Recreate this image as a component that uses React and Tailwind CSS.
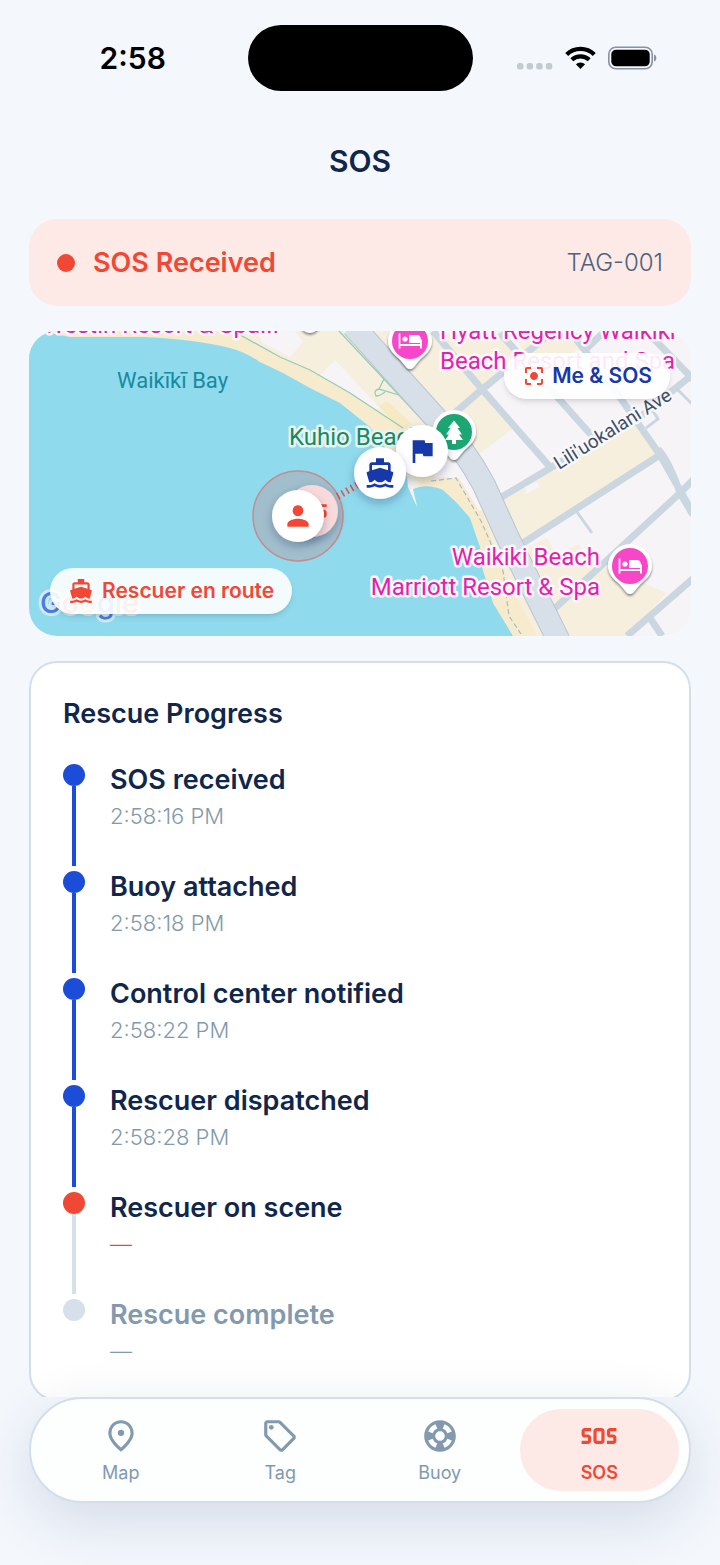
import clsx from "clsx";
import { MdCenterFocusStrong, MdDirectionsBoat, MdFlag, MdOutlineSell, MdPerson, MdSos, MdSupport } from "react-icons/md";

const steps = [
    { title: "SOS received", time: "2:58:16 PM", status: "done" },
    { title: "Buoy attached", time: "2:58:18 PM", status: "done" },
    { title: "Control center notified", time: "2:58:22 PM", status: "done" },
    { title: "Rescuer dispatched", time: "2:58:28 PM", status: "done" },
    { title: "Rescuer on scene", time: "—", status: "active" },
    { title: "Rescue complete", time: "—", status: "pending" },
];

const tabs = [
    { name: "Map", icon: PinIcon },
    { name: "Tag", icon: MdOutlineSell },
    { name: "Buoy", icon: MdSupport },
    { name: "SOS", icon: MdSos, active: true },
];

function PinIcon({ size }) {
    return (
        <svg width={size} height={size} viewBox="0 0 24 24" fill="currentColor" aria-hidden="true">
            <path d="M18 10.2C18 6.57 15.35 4 12 4s-6 2.57-6 6.2c0 2.34 1.95 5.44 6 9.14 4.05-3.7 6-6.8 6-9.14zM12 2c4.2 0 8 3.22 8 8.2 0 3.32-2.67 7.25-8 11.8-5.33-4.55-8-8.48-8-11.8C4 5.22 7.8 2 12 2z" />
            <circle cx="12" cy="10" r="2" />
        </svg>
    );
}

function StatusBar() {
    return (
        <div className="flex items-center pt-[25px] text-black">
            <div className="flex-1 pl-[18px] text-center text-[30px] leading-10 font-semibold">2:58</div>
            <div className="h-[66px] w-[225px] rounded-full bg-black" />
            <div className="flex flex-1 items-center justify-center gap-3 pr-[18px]">
                <svg width="36" height="24" viewBox="0 0 36 24" fill="#c3cad0" aria-hidden="true">
                    <rect x="0" y="17" width="6.5" height="6.5" rx="2.5" />
                    <rect x="9.6" y="17" width="6.5" height="6.5" rx="2.5" />
                    <rect x="19.2" y="17" width="6.5" height="6.5" rx="2.5" />
                    <rect x="28.8" y="17" width="6.5" height="6.5" rx="2.5" />
                </svg>
                <svg width="31" height="24" viewBox="0 0 31 24" fill="none" stroke="#000" aria-hidden="true">
                    <path d="M1.7 8.4a19.8 19.8 0 0 1 27.6 0" strokeWidth="4.2" />
                    <path d="M6.8 13.8a12.6 12.6 0 0 1 17.4 0" strokeWidth="4.2" />
                    <path d="M10.9 18.3a6.8 6.8 0 0 1 9.2 0L15.5 23z" fill="#000" stroke="none" />
                </svg>
                <svg width="49" height="24" viewBox="0 0 49 24" aria-hidden="true">
                    <rect x="0.8" y="1.2" width="43.4" height="21.6" rx="7" fill="none" stroke="#8592a3" strokeWidth="1.6" />
                    <rect x="3.3" y="3.7" width="38.4" height="16.6" rx="4.8" />
                    <path d="M46 8.5c3.2 1 3.2 6 0 7z" fill="#8592a3" />
                </svg>
            </div>
        </div>
    );
}

function PlacePin({ x, y, color, children }) {
    return (
        <g transform={`translate(${x} ${y})`}>
            <path
                d="M0-22a22 22 0 0 1 22 22c0 9-7 14-12 18.5L3.5 26.5Q0 29.5-3.5 26.5L-10 18.5C-15 14-22 9-22 0A22 22 0 0 1 0-22z"
                fill="#fff"
                filter="url(#pinShadow)"
            />
            <circle r="18" fill={color} />
            {children}
        </g>
    );
}

function Bed() {
    return (
        <g fill="none" stroke="#fff" strokeWidth="1.8">
            <path d="M-10.5-7.5V7.5M-10.5 4H11M11 7.5V-1.5" />
            <path d="M0 1V-5H7Q10-5 10-1V1z" fill="#fff" />
            <circle cx="-5" cy="-2" r="2.6" fill="#fff" stroke="none" />
        </g>
    );
}

function Marker({ x, y, icon: Icon, color, fill = "#fff" }) {
    return (
        <g>
            <circle cx={x} cy={y} r="26" fill={fill} filter="url(#markerShadow)" />
            <Icon x={x - 16} y={y - 16} size={32} color={color} />
        </g>
    );
}

function BeachMap() {
    return (
        <svg
            className="block h-full w-full"
            viewBox="0 0 662 305"
            preserveAspectRatio="xMidYMid slice"
            fontFamily='Roboto, "Noto Sans", sans-serif'
            role="img"
            aria-label="Map of Waikiki Bay"
        >
            <defs>
                <filter id="markerShadow" x="-40%" y="-40%" width="180%" height="190%">
                    <feDropShadow dx="0" dy="4" stdDeviation="5" floodColor="#0f2547" floodOpacity="0.28" />
                </filter>
                <filter id="pinShadow" x="-30%" y="-30%" width="160%" height="160%">
                    <feDropShadow dx="0" dy="2" stdDeviation="1.2" floodColor="#3a4450" floodOpacity="0.6" />
                </filter>
            </defs>

            {/* land and blocks */}
            <rect width="662" height="305" fill="#f6f4f6" />
            <path d="M200 0H341L471 167L494 212L540 305H480L380 150L340 110L211 30z" fill="#f6efdd" />
            <path d="M341 0H400L451 56L427 82L411 78z" fill="#f6efdd" />
            <path d="M404 0H471L486 18L455 57zM488 8L545 4L557 21L524 56L498 28z" fill="#f6efdd" />
            <path d="M427 82L455 60L486 96L441 130z" fill="#f6efdd" />
            <path d="M472 170L523 140L611 92L631 124L494 212z" fill="#f6efdd" />
            <path d="M496 155l12-4 3 5-14 7z" fill="#f6f4f6" />
            <path d="M494 218L518 207L528 224L549 213L562 230L638 262L598 305H538L524 279z" fill="#f6efdd" />
            <path d="M227 0H266L274 11L261 26L234 12zM306 29L351 77L341 81L291 44z" fill="#f6f4f6" />

            {/* sand and water */}
            <path d="M0 0H204L251 26L281 39L321 62L374 97L400 140L430 147L453 179L466 219L484 259L508 305H470L400 160L340 110L0 60z" fill="#f7ebce" />
            <path d="M350 75l8-5 26 24-12 6z" fill="#f7e9c4" />
            <path d="M404 146L426 122L440 130L458 178L450 180L430 147z" fill="#f6f4f6" />
            <path
                d="M0 0L21 2L41 6L114 6Q164 8 201 17Q216 21 231 31L254 42L281 57L311 72L341 96L378 146L379 156L388 176L384 158Q398 152 414 159L428 172L441 187L451 216L453 236L464 272L484 305H0z"
                fill="#90daee"
            />
            <path d="M379 150L389 177L382 155L392 150z" fill="#eef1f4" />

            {/* footpaths */}
            <g fill="none" strokeWidth="1.3" stroke="#93cdb6">
                <path d="M204 0L251 26L281 39L321 62L374 97M310 0L354 47L396 92" />
                <path d="M355 48L350 58L370 64M350 58q-6 1-3 7q4 0 9-4" />
            </g>
            <path d="M402 150L427 147L452 190L474 240L480 285L492 303" fill="none" stroke="#aeb9bd" strokeWidth="1.2" strokeDasharray="5 3" />

            {/* streets */}
            <g fill="none" stroke="#cad7e0" strokeWidth="7">
                <path d="M420 87L450 61L524 0M404 0L451 56L521 136M471 2L564 106" />
                <path d="M541 0L588 62L631 124M471 167L523 136L611 86L663 44M494 212L631 124M524 279L651 162L666 147" />
                <path d="M598 305L666 246M625 8L666 50M554 21L576 0" />
                <path d="M629 118Q640 130 651 162L664 184M631 124L664 182" />
                <path d="M621 287L633 305" />
                <path d="M548 181L563 202M617 97L629 88L624 80M645 55L663 73" strokeWidth="3" />
            </g>
            <g fill="none" strokeLinejoin="round">
                <path d="M324-5L404 84Q436 118 455 154L478 205L505 260L530 310" stroke="#bac6cf" strokeWidth="24" />
                <path d="M324-5L404 84Q436 118 455 154L478 205L505 260L530 310" stroke="#d7dfe8" strokeWidth="22" />
            </g>

            {/* place names */}
            <g fontSize="24" strokeWidth="5" strokeLinejoin="round" paintOrder="stroke">
                <text x="88" y="57" fontSize="22" fill="#168b9e">Waikīkī Bay</text>
                <text x="260" y="114" fill="#178a63" stroke="#e8f3f2">Kuhio Beach</text>
                <g fill="#e31fae" stroke="#fbf7fb">
                    <text x="250" y="2" textAnchor="end">Westin Resort &amp; Spa...</text>
                    <text x="411" y="8">Hyatt Regency Waikiki</text>
                    <text x="411" y="38">Beach Resort and Spa</text>
                    <text x="571" y="234" textAnchor="end">Waikiki Beach</text>
                    <text x="571" y="264" textAnchor="end">Marriott Resort &amp; Spa</text>
                </g>
                <text transform="translate(530 139) rotate(-32)" fontSize="19" fill="#3d5068" stroke="#f8f8fa">
                    Lili'uokalani Ave
                </text>
            </g>
            <text x="11" y="282" fontFamily="Inter, sans-serif" fontSize="29" fontWeight="500" stroke="#cdebf6" strokeWidth="6" paintOrder="stroke" strokeLinejoin="round">
                <tspan fill="#4a7ddd">G</tspan>
                <tspan fill="#e8604f">o</tspan>
                <tspan fill="#edb44a">o</tspan>
                <tspan fill="#4a7ddd">g</tspan>
                <tspan fill="#58a55c">l</tspan>
                <tspan fill="#e8604f">e</tspan>
            </text>

            {/* pins */}
            <circle cx="281" cy="-8" r="10" fill="#fff" filter="url(#pinShadow)" />
            <PlacePin x={381} y={10} color="#f846c8"><Bed /></PlacePin>
            <PlacePin x={601} y={235} color="#f846c8"><Bed /></PlacePin>
            <PlacePin x={425} y={101} color="#1ba674">
                <path d="M0-11.5L6-4H3.5L8 2.5H5L9 8H2v4h-4V8h-7l4-5.5h-3L-3.5-4H-6z" fill="#fff" />
            </PlacePin>

            {/* rescue route */}
            <circle cx="269" cy="185" r="45" fill="#a1becd" stroke="#c58d8e" strokeWidth="1.5" />
            <path d="M304 168L330 153" stroke="#ef4a36" strokeWidth="7" strokeDasharray="1.5 3.8" />
            <Marker x={393} y={120} icon={MdFlag} color="#1638a8" />
            <Marker x={351} y={142} icon={MdDirectionsBoat} color="#1638a8" />
            <Marker x={283} y={180} icon={MdSos} color="#f04835" fill="#f8dada" />
            <Marker x={269} y={185} icon={MdPerson} color="#f04835" />
        </svg>
    );
}

function MapCard() {
    return (
        <section className="relative h-[305px] shrink-0 overflow-hidden rounded-[28px]">
            <BeachMap />
            <button
                type="button"
                className="absolute top-[22px] right-[21px] flex h-[46px] items-center gap-1.5 rounded-full bg-white/90 px-[18px] text-[21px] font-semibold text-[#1638a8] shadow-md"
            >
                <MdCenterFocusStrong size={24} className="text-[#f04835]" />
                Me &amp; SOS
            </button>
            <div className="absolute bottom-[22px] left-[21px] flex h-[46px] items-center gap-2 rounded-full bg-white/90 px-[18px] text-[21px] font-semibold text-[#f04835] shadow-md">
                <MdDirectionsBoat size={26} />
                Rescuer en route
            </div>
        </section>
    );
}

function Step({ title, time, status, last }) {
    return (
        <li className={clsx("flex gap-[25px]", !last && "h-[107px]")}>
            <div className="flex flex-col items-center pb-[5px]">
                <span
                    className={clsx(
                        "size-[22px] shrink-0 rounded-full",
                        status === "done" && "bg-[#1b4dd8]",
                        status === "active" && "bg-[#f04835]",
                        status === "pending" && "bg-[#d6e0ea]"
                    )}
                />
                {!last && <span className={clsx("w-1 flex-1", status === "done" ? "bg-[#1b4dd8]" : "bg-[#d6e0ea]")} />}
            </div>
            <div>
                <h3 className={clsx("text-[27px] leading-8 font-semibold", status === "pending" ? "text-[#8299ae]" : "text-[#10264a]")}>
                    {title}
                </h3>
                <p className={clsx("mt-1 text-[22px] leading-8 font-light", status === "active" ? "text-[#f04835]" : "text-[#8299ae]")}>
                    {time}
                </p>
            </div>
        </li>
    );
}

function TabBar() {
    return (
        <nav className="relative mx-[29px] mb-[62px] flex rounded-full border-2 border-[#d3deea] bg-[#fdfefe] p-[10px] shadow-[0_18px_60px_rgba(20,45,100,0.14)]">
            {tabs.map(({ name, icon: Icon, active }) => (
                <a
                    key={name}
                    href="#"
                    aria-current={active ? "page" : undefined}
                    className={clsx(
                        "flex h-[82px] flex-1 flex-col items-center justify-center rounded-full pt-0.5 text-[18px] leading-6",
                        active ? "bg-[#fde9e6] font-semibold text-[#f04835]" : "text-[#8299ae]"
                    )}
                >
                    <Icon size={38} />
                    <span className="mt-1.5">{name}</span>
                </a>
            ))}
        </nav>
    );
}

export default function App() {
    return (
        <div className="flex h-screen flex-col overflow-hidden bg-[#f4f8fd] font-[Inter,sans-serif]">
            <StatusBar />
            <h1 className="pt-[50px] pb-[38px] text-center text-[30px] leading-10 font-semibold text-[#10264a]">SOS</h1>

            <main className="flex min-h-0 flex-1 flex-col gap-[25px] overflow-y-auto px-[29px] [scrollbar-width:none]">
                <section className="flex h-[87px] shrink-0 items-center rounded-[28px] bg-[#fde9e6] px-7">
                    <span className="size-[18px] rounded-full bg-[#f04835]" />
                    <h2 className="ml-[18px] text-[27px] leading-9 font-semibold text-[#f04835]">SOS Received</h2>
                    <span className="ml-auto text-[24px] font-light text-[#4c627c]">TAG-001</span>
                </section>

                <MapCard />

                <section className="shrink-0 rounded-[28px] border-2 border-[#d3deea] bg-white p-8">
                    <h2 className="text-[27px] leading-[38px] font-semibold text-[#10264a]">Rescue Progress</h2>
                    <ol className="mt-[31px]">
                        {steps.map((step, i) => (
                            <Step key={step.title} {...step} last={i === steps.length - 1} />
                        ))}
                    </ol>
                </section>
            </main>

            <TabBar />
        </div>
    );
}
